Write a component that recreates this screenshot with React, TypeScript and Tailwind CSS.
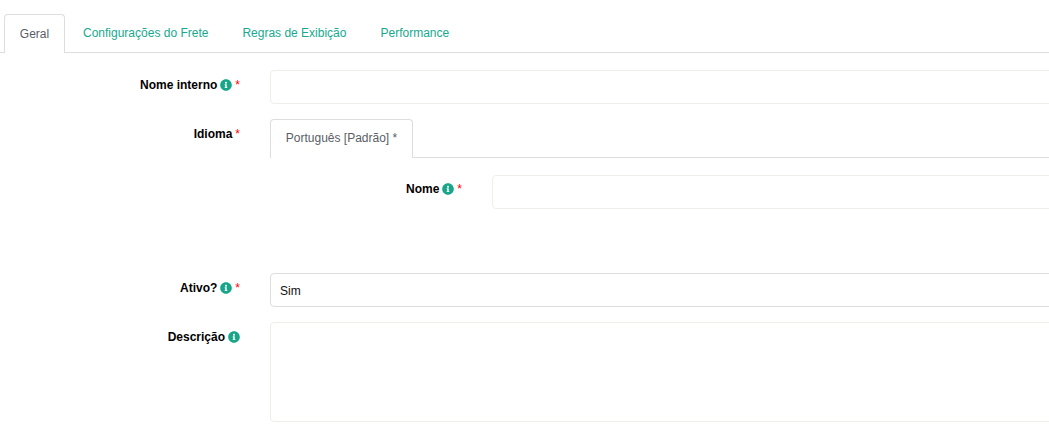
import React from 'react';
import { FaInfoCircle } from 'react-icons/fa';

const Info = () => <FaInfoCircle size={12} className="text-[#17a689] shrink-0 -mt-[2px]" />;
const Req = () => <span className="text-[#ff0000] font-normal">*</span>;

const Label: React.FC<{ text: string; info?: boolean; req?: boolean; className?: string }> = ({ text, info, req, className }) => (
  <label className={`flex items-center justify-end gap-[3px] text-[12px] leading-[17px] font-bold text-black ${className ?? ''}`}>
    <span>{text}</span>
    {info && <Info />}
    {req && <Req />}
  </label>
);

const tabs = ['Configurações do Frete', 'Regras de Exibição', 'Performance'];

export default function App() {
  return (
    <div className="w-[1049px] h-[434px] overflow-hidden bg-white font-['Liberation_Sans',Arial,sans-serif]">
      <div className="w-[1100px] pt-[14px]">
        <div className="flex h-[39px] border-b border-[#dddddd] pl-[4px]">
          <div className="h-[39px] w-[61px] flex items-center justify-center border border-b-0 border-[#dddddd] rounded-t-[4px] bg-white text-[12px] text-[#595e66]">
            Geral
          </div>
          <div className="flex pl-[1px]">
            {tabs.map(t => (
              <a key={t} className="h-[38px] px-[17px] flex items-center text-[12px] text-[#16a98f]">
                {t}
              </a>
            ))}
          </div>
        </div>

        <div className="mt-[17px] flex">
          <div className="w-[240px] pt-[7px]"><Label text="Nome interno" info req /></div>
          <div className="ml-[30px] flex-1 h-[34px] border border-[#eeeeea] rounded-[4px]" />
        </div>

        <div className="mt-[15px] flex">
          <div className="w-[240px] pt-[7px]"><Label text="Idioma" req /></div>
          <div className="ml-[30px] flex-1">
            <div className="flex h-[39px] border-b border-[#dddddd]">
              <div className="h-[39px] w-[143px] pb-[2px] flex items-center justify-center border border-b-0 border-[#dddddd] rounded-t-[4px] bg-white text-[12px] text-[#595e66]">
                Português [Padrão] *
              </div>
            </div>
            <div className="mt-[17px] flex">
              <div className="w-[192px] pt-[6px]"><Label text="Nome" info req /></div>
              <div className="ml-[30px] flex-1 h-[34px] border border-[#eeeeea] rounded-[4px]" />
            </div>
          </div>
        </div>

        <div className="mt-[64px] flex">
          <div className="w-[240px] pt-[7px]"><Label text="Ativo?" info req /></div>
          <div className="ml-[30px] flex-1 h-[34px] pt-[1px] border border-[#dddddd] rounded-[4px] flex items-center px-[9px] text-[12px] text-[#111111]">
            Sim
          </div>
        </div>

        <div className="mt-[15px] flex">
          <div className="w-[240px] pt-[7px]"><Label text="Descrição" info /></div>
          <div className="ml-[30px] flex-1 h-[100px] border border-[#eeeeea] rounded-[4px]" />
        </div>
      </div>
    </div>
  );
}
